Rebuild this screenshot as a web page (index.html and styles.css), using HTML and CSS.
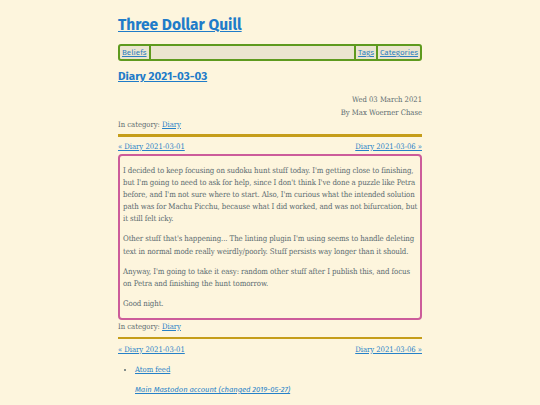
FILE: index.html
```html
<!DOCTYPE html>
<html lang="en">
<head>
<meta charset="utf-8">
<title>Diary 2021-03-03 - Three Dollar Quill</title>
<link rel="stylesheet" href="styles.css">
</head>
<body>
<div class="page">
  <header class="site-header">
    <h1 class="site-title"><a href="#">Three Dollar Quill</a></h1>
    <nav class="menu">
      <a class="menu-item menu-left" href="#">Beliefs</a>
      <span class="menu-fill"></span>
      <a class="menu-item menu-right" href="#">Tags</a>
      <a class="menu-item menu-right" href="#">Categories</a>
    </nav>
  </header>
  <article class="post">
    <h2 class="post-title"><a href="#">Diary 2021-03-03</a></h2>
    <div class="post-meta">
      <div>Wed 03 March 2021</div>
      <div>By Max Woerner Chase</div>
    </div>
    <div class="category">In category: <a href="#">Diary</a></div>
    <hr class="rule">
    <div class="pager">
      <a href="#">« Diary 2021-03-01</a>
      <a href="#">Diary 2021-03-06 »</a>
    </div>
    <div class="content">
      <p>I decided to keep focusing on sudoku hunt stuff today. I'm getting close to finishing, but I'm going to need to ask for help, since I don't think I've done a puzzle like Petra before, and I'm not sure where to start. Also, I'm curious what the intended solution path was for Machu Picchu, because what I did worked, and was not bifurcation, but it still felt icky.</p>
      <p>Other stuff that's happening... The linting plugin I'm using seems to handle deleting text in normal mode really weirdly/poorly. Stuff persists way longer than it should.</p>
      <p>Anyway, I'm going to take it easy: random other stuff after I publish this, and focus on Petra and finishing the hunt tomorrow.</p>
      <p>Good night.</p>
    </div>
    <div class="category category-bottom">In category: <a href="#">Diary</a></div>
    <hr class="rule rule-bottom">
    <div class="pager">
      <a href="#">« Diary 2021-03-01</a>
      <a href="#">Diary 2021-03-06 »</a>
    </div>
  </article>
  <footer class="footer">
    <ul class="feeds">
      <li><a href="#">Atom feed</a></li>
    </ul>
    <p class="social"><a href="#">Main Mastodon account (changed 2019-05-27)</a></p>
  </footer>
</div>
</body>
</html>
```
FILE: styles.css
```css
html, body {
  margin: 0;
  padding: 0;
  background: #fdf5dd;
}
body {
  font-family: "DejaVu Serif Condensed", "DejaVu Serif", serif;
  font-size: 7.8px;
  color: #5b6b70;
}
a {
  color: #2681c8;
}
.page {
  width: 304px;
  margin: 0 auto;
  padding-top: 13px;
}
.site-title {
  font-family: "Fira Sans", "Open Sans", sans-serif;
  font-size: 15.5px;
  font-weight: 700;
  margin: 0 0 7px 0;
  line-height: 24px;
}
.site-title a {
  color: #1f7cc9;
}
.menu {
  display: flex;
  align-items: stretch;
  border: 2px solid #5e9a1e;
  border-radius: 3px;
  background: #ebe5cf;
  height: 13px;
  font-family: "Fira Sans", "Open Sans", sans-serif;
  font-size: 8px;
  line-height: 13px;
}
.menu-item {
  padding: 0 2px;
  color: #2f7fc0;
}
.menu-left {
  border-right: 2px solid #5e9a1e;
}
.menu-right {
  border-left: 2px solid #5e9a1e;
}
.menu-fill {
  flex: 1;
}
.post-title {
  font-family: "Fira Sans", "Open Sans", sans-serif;
  font-size: 11.6px;
  font-weight: 700;
  margin: 7px 0 10px 0;
  line-height: 16px;
}
.post-title a {
  color: #1f7cc9;
}
.post-meta {
  text-align: right;
  line-height: 12.5px;
  font-size: 7.6px;
}
.category {
  line-height: 12px;
  font-size: 7.6px;
}
.category-bottom {
  margin-top: 1px;
}
.rule {
  border: 0;
  height: 2.5px;
  background: #c59d1a;
  margin: 3px 0 4.5px 0;
}
.rule-bottom {
  margin-top: 4px;
}
.pager {
  display: flex;
  justify-content: space-between;
  line-height: 12px;
  font-size: 7.6px;
  margin-bottom: 1px;
}
.content {
  border: 2px solid #cc5c9a;
  border-radius: 4px;
  padding: 1px 2px 0 3px;
  line-height: 12.1px;
  letter-spacing: -0.1px;
}
.content p {
  margin: 8px 0;
}
.feeds {
  margin: 8px 0 0 0;
  padding-left: 17px;
  line-height: 12px;
  font-size: 7.6px;
}
.social {
  font-family: "Fira Sans", "Open Sans", sans-serif;
  font-style: italic;
  font-size: 7.6px;
  margin: 8px 0 0 17px;
  line-height: 12px;
}
```
